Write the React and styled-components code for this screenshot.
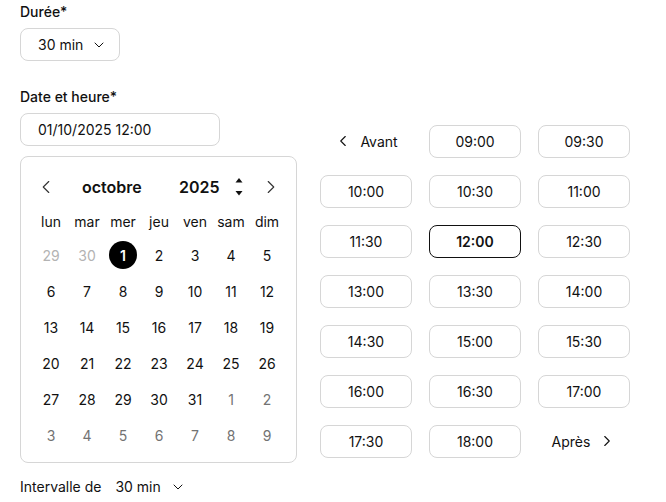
import { createGlobalStyle } from 'styled-components';
import styled from 'styled-components';
import { ChevronDown, ChevronLeft, ChevronRight } from 'lucide-react';

const GlobalStyle = createGlobalStyle`
  body {
    margin: 0;
    background: #fff;
    font-family: Inter, "Noto Sans", sans-serif;
    color: #111;
  }
`;

const Page = styled.div`
  padding: 3px 20px 0;
  width: 666px;
  box-sizing: border-box;
`;

const Field = styled.div`
  display: flex;
  flex-direction: column;
  align-items: flex-start;
  margin-top: ${(p) => p.$top || 0}px;
`;

const Label = styled.label`
  font-size: 14px;
  line-height: 18px;
  font-weight: 500;
  margin-bottom: 7px;
`;

const SelectBox = styled.button`
  display: flex;
  align-items: center;
  gap: 8px;
  height: 33px;
  padding: 0 12px 0 17px;
  border: 1px solid #d6d6d6;
  border-radius: 8px;
  background: #fff;
  font: inherit;
  font-size: 14px;
  color: #111;
`;

const TextInput = styled.div`
  display: flex;
  align-items: center;
  box-sizing: border-box;
  width: 200px;
  height: 33px;
  padding-left: 17px;
  border: 1px solid #d6d6d6;
  border-radius: 8px;
  font-size: 14px;
`;

const Row = styled.div`
  display: flex;
  align-items: flex-start;
  gap: 23px;
`;

const Calendar = styled.div`
  box-sizing: border-box;
  width: 277px;
  height: 307px;
  margin-top: 10px;
  padding: 12px 12px 11px;
  border: 1px solid #d6d6d6;
  border-radius: 8px;
`;

const CalHeader = styled.div`
  display: flex;
  align-items: center;
  height: 36px;
`;

const NavButton = styled.span`
  display: flex;
  align-items: center;
  justify-content: center;
  width: 26px;
  color: #333;
  margin-left: ${(p) => (p.$end ? 'auto' : '0')};
`;

const HeadText = styled.span`
  font-size: 16px;
  font-weight: 600;
  width: ${(p) => p.$w}px;
  margin-left: ${(p) => p.$ml || 0}px;
`;

const Spinner = styled.svg`
  margin-left: 14px;
  display: block;
`;

const DayGrid = styled.div`
  display: grid;
  grid-template-columns: repeat(7, 36px);
  grid-template-rows: 32px;
  grid-auto-rows: 36px;
`;

const WeekDay = styled.div`
  display: flex;
  align-items: center;
  justify-content: center;
  font-size: 14px;
`;

const Day = styled.div`
  display: flex;
  align-items: center;
  justify-content: center;
  font-size: 14px;
  color: ${(p) => (p.$tone === 'prev' ? '#b3b3b3' : p.$tone === 'next' ? '#737373' : '#111')};
`;

const Selected = styled.span`
  display: flex;
  align-items: center;
  justify-content: center;
  width: 28px;
  height: 28px;
  border-radius: 50%;
  background: #000;
  color: #fff;
  font-weight: 600;
`;

const Slots = styled.div`
  display: grid;
  grid-template-columns: repeat(3, 92px);
  grid-auto-rows: 33px;
  gap: 17px;
  margin-top: 64px;
`;

const Slot = styled.button`
  box-sizing: border-box;
  border: 1px solid ${(p) => (p.$active ? '#111' : '#d6d6d6')};
  border-radius: 8px;
  background: #fff;
  font: inherit;
  font-size: 14px;
  font-weight: ${(p) => (p.$active ? 600 : 400)};
  color: #111;
`;

const PageLink = styled.button`
  display: flex;
  align-items: center;
  justify-content: center;
  gap: 8px;
  border: none;
  background: none;
  font: inherit;
  font-size: 14px;
  color: #111;
  padding: 0 0 1px;
`;

const IntervalRow = styled.div`
  display: flex;
  align-items: center;
  margin-top: 15px;
  font-size: 14px;
  line-height: 18px;
  gap: 14px;
`;

const IntervalValue = styled.span`
  display: flex;
  align-items: center;
  gap: 9px;
`;

const weekDays = ['lun', 'mar', 'mer', 'jeu', 'ven', 'sam', 'dim'];

const days = [
  ...[29, 30].map((d) => ({ d, tone: 'prev' })),
  ...Array.from({ length: 31 }, (_, i) => ({ d: i + 1 })),
  ...Array.from({ length: 9 }, (_, i) => ({ d: i + 1, tone: 'next' })),
];

const times = [
  '09:00', '09:30', '10:00', '10:30', '11:00', '11:30', '12:00', '12:30',
  '13:00', '13:30', '14:00', '14:30', '15:00', '15:30', '16:00', '16:30',
  '17:00', '17:30', '18:00',
];

const App = () => {
  return (
    <Page>
      <GlobalStyle />
      <Field>
        <Label>Durée*</Label>
        <SelectBox>
          30 min
          <ChevronDown size={16} strokeWidth={1.5} />
        </SelectBox>
      </Field>

      <Row>
        <Field $top={27}>
          <Label>Date et heure*</Label>
          <TextInput>01/10/2025 12:00</TextInput>
          <Calendar>
            <CalHeader>
              <NavButton>
                <ChevronLeft size={22} strokeWidth={1.25} />
              </NavButton>
              <HeadText $w={97} $ml={23}>octobre</HeadText>
              <HeadText>2025</HeadText>
              <Spinner width="10" height="24" viewBox="0 0 10 24">
                <path d="M5 3 L8.5 7.5 H1.5 Z" fill="#111" />
                <path d="M5 20.5 L8.5 16 H1.5 Z" fill="#111" />
              </Spinner>
              <NavButton $end>
                <ChevronRight size={22} strokeWidth={1.25} />
              </NavButton>
            </CalHeader>
            <DayGrid>
              {weekDays.map((w) => (
                <WeekDay key={w}>{w}</WeekDay>
              ))}
              {days.map((item, i) => (
                <Day key={i} $tone={item.tone}>
                  {!item.tone && item.d === 1 ? <Selected>1</Selected> : item.d}
                </Day>
              ))}
            </DayGrid>
          </Calendar>
        </Field>

        <Slots>
          <PageLink>
            <ChevronLeft size={18} strokeWidth={1.5} />
            Avant
          </PageLink>
          {times.map((t) => (
            <Slot key={t} $active={t === '12:00'}>
              {t}
            </Slot>
          ))}
          <PageLink>
            Après
            <ChevronRight size={18} strokeWidth={1.5} />
          </PageLink>
        </Slots>
      </Row>

      <IntervalRow>
        Intervalle de
        <IntervalValue>
          30 min
          <ChevronDown size={16} strokeWidth={1.5} />
        </IntervalValue>
      </IntervalRow>
    </Page>
  );
};

export default App;
